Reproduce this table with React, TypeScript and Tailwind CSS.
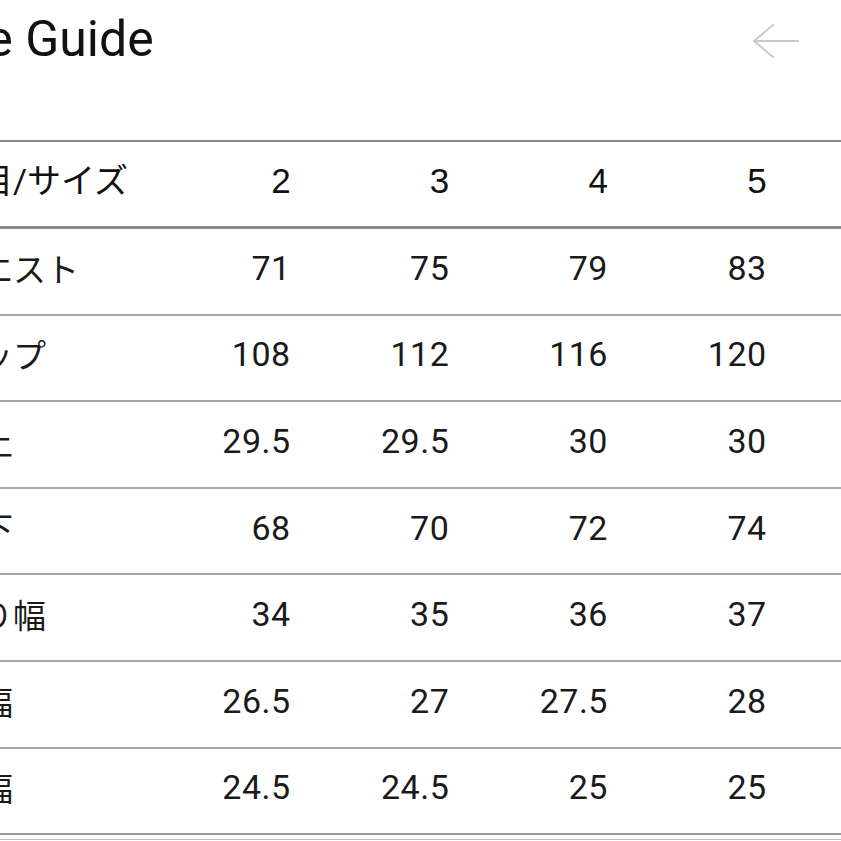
const sizes = ["2", "3", "4", "5", "6"];

const rows = [
  { label: "ウエスト", values: ["71", "75", "79", "83", "87"] },
  { label: "ヒップ", values: ["108", "112", "116", "120", "124"] },
  { label: "股上", values: ["29.5", "29.5", "30", "30", "30.5"] },
  { label: "股下", values: ["68", "70", "72", "74", "76"] },
  { label: "渡り幅", values: ["34", "35", "36", "37", "38"] },
  { label: "膝幅", values: ["26.5", "27", "27.5", "28", "28.5"] },
  { label: "裾幅", values: ["24.5", "24.5", "25", "25", "25.5"] },
];

const grid = "grid grid-cols-[185px_158.67px_158.67px_158.67px_158.67px_158.67px]";

export default function App() {
  return (
    <div className="w-[841px] h-[841px] overflow-hidden bg-white text-[#1a1a1a]">
      <div className="ml-[-53px] w-[1000px] flex flex-col">

        {/* title bar */}
        <div className="h-[140px] flex items-start pt-[10px]">
          <h1 className="ml-[-27px] w-[256px] shrink-0 whitespace-nowrap font-['Roboto','Noto_Sans_CJK_JP',sans-serif] text-[50px] leading-[58px] text-[#111]">
            Size Guide
          </h1>
          <svg className="ml-[575px] mt-[14px]" width="50" height="36" viewBox="0 0 50 36" fill="none">
            <path d="M47 17H3M22 1L3 17L22 33" stroke="#c9c9c9" strokeWidth="2" strokeLinecap="round" strokeLinejoin="round" />
          </svg>
        </div>

        {/* table */}
        <div className="border-t-2 border-[#8a8a8a]">
          <div className={`${grid} h-[87px] items-center pb-[6px] border-b-[3px] border-[#8a8a8a] font-['Liberation_Sans',Arial,'Noto_Sans_CJK_JP',sans-serif] text-[35px] text-[#111]`}>
            <div className="whitespace-nowrap ml-[-2px] font-['Roboto','Noto_Sans_CJK_JP',sans-serif] text-[34px]">項目/サイズ</div>
            {sizes.map((s) => (
              <div key={s} className="text-right">{s}</div>
            ))}
          </div>

          {rows.map((r, i) => (
            <div
              key={r.label}
              className={`${grid} h-[86.6px] items-center pb-[6px] font-['Roboto','Noto_Sans_CJK_JP',sans-serif] text-[34px] tracking-[0.5px] ${
                i === rows.length - 1 ? "border-b-[2px] border-[#999]" : "border-b-2 border-[#a6a6a6]"
              }`}
            >
              <div className="whitespace-nowrap font-['Noto_Sans_CJK_JP',sans-serif] text-[33px] tracking-normal">{r.label}</div>
              {r.values.map((v, j) => (
                <div key={j} className="text-right">{v}</div>
              ))}
            </div>
          ))}
          <div className="mt-[4px] border-t border-[#bdbdbd]" />
        </div>
      </div>
    </div>
  );
}
